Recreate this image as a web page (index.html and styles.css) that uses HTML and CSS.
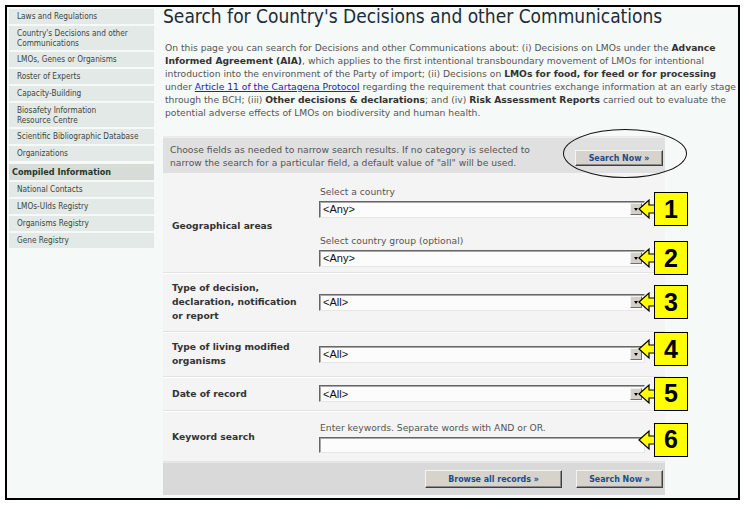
FILE: index.html
```html
<!DOCTYPE html>
<html lang="en">
<head>
<meta charset="utf-8">
<title>Search for Country's Decisions and other Communications</title>
<link rel="stylesheet" href="styles.css">
</head>
<body>
<div class="frame">
  <nav class="sidebar">
    <a class="nav-item">Laws and Regulations</a>
    <a class="nav-item two">Country's Decisions and other<br>Communications</a>
    <a class="nav-item">LMOs, Genes or Organisms</a>
    <a class="nav-item">Roster of Experts</a>
    <a class="nav-item">Capacity-Building</a>
    <a class="nav-item two">Biosafety Information<br>Resource Centre</a>
    <a class="nav-item">Scientific Bibliographic Database</a>
    <a class="nav-item">Organizations</a>
    <div class="nav-head">Compiled Information</div>
    <a class="nav-item">National Contacts</a>
    <a class="nav-item">LMOs-UIds Registry</a>
    <a class="nav-item">Organisms Registry</a>
    <a class="nav-item">Gene Registry</a>
  </nav>
  <main class="main">
    <h1 class="title">Search for Country's Decisions and other Communications</h1>
    <p class="intro">On this page you can search for Decisions and other Communications about: (i) Decisions on LMOs under the <b>Advance</b><br><b>Informed Agreement (AIA)</b>, which applies to the first intentional transboundary movement of LMOs for intentional<br>introduction into the environment of the Party of import; (ii) Decisions on <b>LMOs for food, for feed or for processing</b><br>under <a class="link">Article 11 of the Cartagena Protocol</a> regarding the requirement that countries exchange information at an early stage<br>through the BCH; (iii) <b>Other decisions &amp; declarations</b>; and (iv) <b>Risk Assessment Reports</b> carried out to evaluate the<br>potential adverse effects of LMOs on biodiversity and human health.</p>

    <div class="form">
      <div class="notice">
        <p class="notice-text">Choose fields as needed to narrow search results. If no category is selected to<br>narrow the search for a particular field, a default value of "all" will be used.</p>
        <span class="btn btn-top">Search Now »</span>
        <span class="ring"></span>
      </div>

      <div class="row row-geo">
        <div class="label">Geographical areas</div>
        <div class="fields">
          <div class="hint">Select a country</div>
          <div class="select"><span class="value">&lt;Any&gt;</span><i class="drop"></i>
            <span class="ann"><svg class="ann-arrow" width="17" height="34" viewBox="0 0 17 34"><polygon points="1,17 11,8 11,13 17,13 17,21 11,21 11,26" /></svg><span class="ann-box">1</span></span>
          </div>
          <div class="hint hint-second">Select country group (optional)</div>
          <div class="select"><span class="value">&lt;Any&gt;</span><i class="drop"></i>
            <span class="ann"><svg class="ann-arrow" width="17" height="34" viewBox="0 0 17 34"><polygon points="1,17 11,8 11,13 17,13 17,21 11,21 11,26" /></svg><span class="ann-box">2</span></span>
          </div>
        </div>
      </div>

      <div class="row row-type">
        <div class="label">Type of decision,<br>declaration, notification<br>or report</div>
        <div class="fields">
          <div class="select"><span class="value">&lt;All&gt;</span><i class="drop"></i>
            <span class="ann"><svg class="ann-arrow" width="17" height="34" viewBox="0 0 17 34"><polygon points="1,17 11,8 11,13 17,13 17,21 11,21 11,26" /></svg><span class="ann-box">3</span></span>
          </div>
        </div>
      </div>

      <div class="row row-lmo">
        <div class="label">Type of living modified<br>organisms</div>
        <div class="fields">
          <div class="select"><span class="value">&lt;All&gt;</span><i class="drop"></i>
            <span class="ann ann-up"><svg class="ann-arrow" width="17" height="34" viewBox="0 0 17 34"><polygon points="1,17 11,8 11,13 17,13 17,21 11,21 11,26" /></svg><span class="ann-box">4</span></span>
          </div>
        </div>
      </div>

      <div class="row row-date">
        <div class="label">Date of record</div>
        <div class="fields">
          <div class="select"><span class="value">&lt;All&gt;</span><i class="drop"></i>
            <span class="ann"><svg class="ann-arrow" width="17" height="34" viewBox="0 0 17 34"><polygon points="1,17 11,8 11,13 17,13 17,21 11,21 11,26" /></svg><span class="ann-box">5</span></span>
          </div>
        </div>
      </div>

      <div class="row row-key">
        <div class="label">Keyword search</div>
        <div class="fields">
          <div class="hint">Enter keywords. Separate words with AND or OR.</div>
          <div class="select input">
            <span class="ann ann-top"><svg class="ann-arrow" width="17" height="34" viewBox="0 0 17 34"><polygon points="1,17 11,8 11,13 17,13 17,21 11,21 11,26" /></svg><span class="ann-box">6</span></span>
          </div>
        </div>
      </div>

      <div class="actions">
        <span class="btn btn-wide">Browse all records »</span>
        <span class="btn btn-std">Search Now »</span>
      </div>
    </div>
  </main>
</div>
</body>
</html>
```

FILE: styles.css
```css
* { box-sizing: border-box; }

html, body {
  margin: 0;
  padding: 0;
  background: #ffffff;
}

body {
  font-family: "DejaVu Sans", Verdana, sans-serif;
  font-size: 9.2px;
  color: #444;
}

.frame {
  margin: 5px 0 0 5px;
  width: 735px;
  height: 495px;
  border: 2px solid #000;
  background: #f5f9f7;
  display: flex;
  align-items: flex-start;
}

/* ---------- sidebar ---------- */
.sidebar {
  width: 147px;
  padding: 2px 0 0 2px;
  display: flex;
  flex-direction: column;
  font-family: "DejaVu Sans Condensed", "DejaVu Sans", sans-serif;
  font-stretch: condensed;
}

.nav-item {
  display: block;
  background: #e3e9e6;
  color: #3b4640;
  padding: 2px 0 3px 8px;
  line-height: 10px;
  font-size: 8.2px;
  margin-bottom: 2px;
  white-space: nowrap;
}

.nav-item.two {
  padding-top: 2px;
  padding-bottom: 2px;
}

.nav-head {
  background: #d7dcd9;
  color: #1d3a29;
  font-weight: bold;
  font-size: 9px;
  line-height: 16px;
  padding-left: 3px;
  margin-top: 1px;
  margin-bottom: 2px;
}

/* ---------- main ---------- */
.main {
  margin-left: 9px;
  width: 502px;
}

.title {
  margin: 0;
  font-family: "DejaVu Sans Condensed", "DejaVu Sans", sans-serif;
  font-stretch: condensed;
  font-weight: normal;
  font-size: 19px;
  line-height: 19px;
  color: #1b2d3a;
  white-space: nowrap;
}

.intro {
  margin: 15px 0 0 2px;
  line-height: 13px;
  white-space: nowrap;
  color: #555;
}

.intro b { color: #333; }

.link {
  color: #2222bb;
  text-decoration: underline;
}

/* ---------- form ---------- */
.form {
  margin-top: 17px;
  background: #f4f4f4;
}

.notice {
  position: relative;
  display: flex;
  align-items: center;
  justify-content: space-between;
  height: 37px;
  padding: 0 2px 0 7px;
  background: #e0e0e0;
  border-top: 2px solid #ececec;
}

.notice-text {
  margin: 0;
  line-height: 13px;
  color: #555;
  white-space: nowrap;
}

.ring {
  position: absolute;
  left: 400px;
  top: -9px;
  width: 124px;
  height: 49px;
  border: 1px solid #111;
  border-radius: 50%;
}

.btn {
  display: inline-flex;
  align-items: center;
  justify-content: center;
  background: #d6d3cc;
  color: #1d4b8a;
  font-family: "DejaVu Sans Condensed", "DejaVu Sans", sans-serif;
  font-stretch: condensed;
  font-weight: bold;
  font-size: 8.8px;
  border: 1px solid;
  border-color: #f4f4f4 #404040 #404040 #f4f4f4;
  box-shadow: inset -1px -1px 0 #8a8a8a;
  white-space: nowrap;
}

.btn-top { width: 88px; height: 16px; margin-top: 4px; }
.btn-wide { width: 137px; height: 18px; }
.btn-std { width: 87px; height: 18px; }

.row {
  display: flex;
  align-items: center;
  border-bottom: 1px solid #e3e3e3;
  box-shadow: 0 1px 0 #ffffff;
}

.label {
  width: 156px;
  flex: none;
  padding-left: 9px;
  font-weight: bold;
  color: #333;
  line-height: 14px;
}

.fields {
  width: 326px;
}

.row-geo { height: 100px; padding-top: 6px; }
.row-type { height: 59px; }
.row-lmo { height: 45px; }
.row-date { height: 34px; }
.row-key { height: 51px; padding-top: 1px; }

.hint {
  color: #555;
  line-height: 13px;
  padding-left: 1px;
  margin-bottom: 3px;
}

.hint-second { margin-top: 16px; }

.select {
  position: relative;
  display: flex;
  align-items: center;
  justify-content: space-between;
  height: 17px;
  background: #fcfcfc;
  border: 1px solid;
  border-color: #666 #e6e6e6 #e6e6e6 #666;
  box-shadow: inset 1px 1px 0 #a8a8a8;
}

.value {
  font-family: "Liberation Sans", Arial, sans-serif;
  font-size: 11px;
  color: #111;
  padding-left: 3px;
}

.drop {
  position: relative;
  width: 12px;
  height: 12px;
  margin-right: 2px;
  background: #d3d0c9;
  border: 1px solid;
  border-color: #f0f0f0 #707070 #707070 #f0f0f0;
}

.drop::after {
  content: "";
  position: absolute;
  left: 3px;
  top: 4px;
  border-left: 2px solid transparent;
  border-right: 2px solid transparent;
  border-top: 3px solid #000;
}

.input { height: 16px; }

/* ---------- annotations ---------- */
.ann {
  position: absolute;
  left: calc(100% - 6px);
  top: 50%;
  transform: translateY(-50%);
  display: flex;
  align-items: center;
  z-index: 2;
}

.ann-up { transform: translateY(calc(-50% - 5px)); }
.ann-top { transform: translateY(calc(-50% - 5px)); }

.ann-arrow {
  display: block;
  margin-right: -1px;
}

.ann-arrow polygon {
  fill: #ffff00;
  stroke: #000;
  stroke-width: 1.2;
  stroke-linejoin: miter;
}

.ann-box {
  width: 34px;
  height: 34px;
  background: #ffff00;
  border: 1.5px solid #000;
  display: flex;
  align-items: center;
  justify-content: center;
  font-family: "Liberation Sans", Arial, sans-serif;
  font-weight: bold;
  font-size: 25px;
  color: #000;
  line-height: 1;
}

/* ---------- actions ---------- */
.actions {
  display: flex;
  justify-content: flex-end;
  align-items: center;
  gap: 14px;
  height: 33px;
  padding-right: 2px;
  background: #d9d9d9;
  border-top: 1px solid #e8e8e8;
}
```
